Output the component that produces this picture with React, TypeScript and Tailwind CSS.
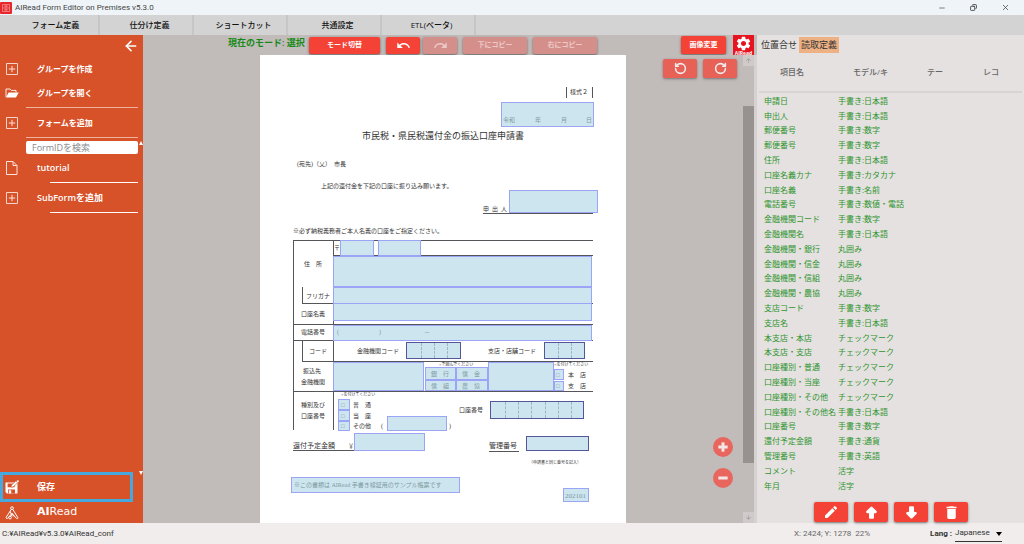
import React, { useState } from 'react';
import { ArrowLeft, Minus, Copy, X, Plus, RotateCcw, RotateCw } from 'lucide-react';
import { MdUndo, MdRedo, MdSettings, MdEdit, MdDelete, MdArrowUpward, MdArrowDownward } from 'react-icons/md';
import { TbArrowBigDownFilled, TbArrowBigUpFilled } from 'react-icons/tb';

type Tone = 'ink' | 'faded';

interface Label {
  x: number;
  y: number; // vertical centre
  text: string;
  size?: 'xs' | 'sm' | 'md' | 'lg';
  tone?: Tone;
}

interface Region {
  x: number;
  y: number;
  w: number;
  h: number;
  dark?: boolean;
  dividers?: number[];
}

const menus = ['フォーム定義', '仕分け定義', 'ショートカット', '共通設定', 'ETL(ベータ)'];

const fields: [string, string][] = [
  ['申請日', '手書き:日本語'],
  ['申出人', '手書き:日本語'],
  ['郵便番号', '手書き:数字'],
  ['郵便番号', '手書き:数字'],
  ['住所', '手書き:日本語'],
  ['口座名義カナ', '手書き:カタカナ'],
  ['口座名義', '手書き:名前'],
  ['電話番号', '手書き:数値・電話'],
  ['金融機関コード', '手書き:数字'],
  ['金融機関名', '手書き:日本語'],
  ['金融機関・銀行', '丸囲み'],
  ['金融機関・信金', '丸囲み'],
  ['金融機関・信組', '丸囲み'],
  ['金融機関・農協', '丸囲み'],
  ['支店コード', '手書き:数字'],
  ['支店名', '手書き:日本語'],
  ['本支店・本店', 'チェックマーク'],
  ['本支店・支店', 'チェックマーク'],
  ['口座種別・普通', 'チェックマーク'],
  ['口座種別・当座', 'チェックマーク'],
  ['口座種別・その他', 'チェックマーク'],
  ['口座種別・その他名', '手書き:日本語'],
  ['口座番号', '手書き:数字'],
  ['還付予定金額', '手書き:通貨'],
  ['管理番号', '手書き:英語'],
  ['コメント', '活字'],
  ['年月', '活字'],
];

// Coordinates on the scanned page, origin at its top left corner
const rules: [number, number, number, number][] = [
  [306, 32, 1, 11],
  [332, 32, 1, 11],
  [223, 158, 110, 1],
  [33, 185, 300, 1],
  [33, 185, 1, 190],
  [73, 185, 1, 190],
  [73, 200, 260, 1],
  [42, 232, 1, 16],
  [42, 248, 291, 1],
  [33, 269, 300, 1],
  [33, 285, 300, 1],
  [42, 285, 1, 21],
  [42, 306, 291, 1],
  [33, 336, 300, 1],
  [33, 395, 61, 1],
  [229, 396, 30, 1],
];

const regions: Region[] = [
  { x: 241, y: 47, w: 93, h: 25 },
  { x: 249, y: 135, w: 89, h: 23 },
  { x: 80, y: 185, w: 34, h: 16 },
  { x: 118, y: 185, w: 43, h: 16 },
  { x: 73, y: 201, w: 259, h: 31 },
  { x: 73, y: 232, w: 259, h: 17 },
  { x: 73, y: 248, w: 259, h: 18 },
  { x: 73, y: 270, w: 259, h: 16 },
  { x: 146, y: 287, w: 55, h: 17, dark: true, dividers: [14, 27, 40] },
  { x: 284, y: 287, w: 41, h: 17, dark: true, dividers: [13, 26] },
  { x: 73, y: 307, w: 91, h: 29 },
  { x: 165, y: 312, w: 31, h: 13 },
  { x: 196, y: 312, w: 32, h: 13 },
  { x: 165, y: 325, w: 31, h: 11 },
  { x: 196, y: 325, w: 32, h: 11 },
  { x: 228, y: 307, w: 66, h: 29 },
  { x: 294, y: 314, w: 10, h: 11 },
  { x: 294, y: 326, w: 10, h: 10 },
  { x: 78, y: 344, w: 12, h: 11 },
  { x: 78, y: 355, w: 12, h: 11 },
  { x: 78, y: 366, w: 12, h: 10 },
  { x: 127, y: 361, w: 60, h: 15 },
  { x: 230, y: 346, w: 94, h: 18, dark: true, dividers: [14, 27, 40, 54, 67, 80] },
  { x: 94, y: 378, w: 71, h: 18 },
  { x: 266, y: 381, w: 63, h: 15, dark: true },
  { x: 31, y: 422, w: 169, h: 16 },
  { x: 303, y: 433, w: 26, h: 14 },
];

const labels: Label[] = [
  { x: 310, y: 37, text: '様式２' },
  { x: 243, y: 65, text: '令和', tone: 'faded' },
  { x: 275, y: 65, text: '年', tone: 'faded' },
  { x: 301, y: 65, text: '月', tone: 'faded' },
  { x: 326, y: 65, text: '日', tone: 'faded' },
  { x: 102, y: 81, text: '市民税・県民税還付金の振込口座申請書', size: 'lg' },
  { x: 37, y: 109, text: '(宛先)（乂）　市長' },
  { x: 61, y: 131, text: '上記の還付金を下記の口座に振り込み願います。' },
  { x: 223, y: 154, text: '申  出  人' },
  { x: 33, y: 176, text: '※必ず納税義務者ご本人名義の口座をご指定ください。' },
  { x: 74, y: 193, text: '〒' },
  { x: 44, y: 209, text: '住　所' },
  { x: 46, y: 241, text: 'フリガナ' },
  { x: 41, y: 259, text: '口座名義' },
  { x: 41, y: 277, text: '電話番号' },
  { x: 77, y: 277, text: '(', tone: 'faded' },
  { x: 119, y: 277, text: ')', tone: 'faded' },
  { x: 164, y: 277, text: '－', tone: 'faded' },
  { x: 49, y: 296, text: 'コード' },
  { x: 97, y: 296, text: '金融機関コード' },
  { x: 228, y: 296, text: '支店・店舗コード' },
  { x: 43, y: 316, text: '振込先' },
  { x: 41, y: 327, text: '金融機関' },
  { x: 179, y: 310, text: '○で囲んでください', size: 'xs' },
  { x: 294, y: 310, text: '○を付けてください', size: 'xs' },
  { x: 171, y: 319, text: '銀　行', tone: 'faded' },
  { x: 202, y: 319, text: '信　金', tone: 'faded' },
  { x: 171, y: 331, text: '信　組', tone: 'faded' },
  { x: 202, y: 331, text: '農　協', tone: 'faded' },
  { x: 296, y: 320, text: '□', tone: 'faded' },
  { x: 296, y: 331, text: '□', tone: 'faded' },
  { x: 308, y: 320, text: '本　店' },
  { x: 308, y: 331, text: '支　店' },
  { x: 81, y: 340, text: '○を付けてください', size: 'xs' },
  { x: 41, y: 350, text: '種別及び' },
  { x: 41, y: 361, text: '口座番号' },
  { x: 81, y: 350, text: '□', tone: 'faded' },
  { x: 81, y: 361, text: '□', tone: 'faded' },
  { x: 81, y: 371, text: '□', tone: 'faded' },
  { x: 93, y: 350, text: '普　通' },
  { x: 93, y: 361, text: '当　座' },
  { x: 93, y: 371, text: 'その他' },
  { x: 121, y: 371, text: '(' },
  { x: 189, y: 371, text: ')' },
  { x: 199, y: 355, text: '口座番号' },
  { x: 33, y: 391, text: '還付予定金額', size: 'md' },
  { x: 88, y: 391, text: '￥', size: 'sm' },
  { x: 229, y: 391, text: '管理番号', size: 'md' },
  { x: 269, y: 408, text: '（申請書と同じ番号を記入）', size: 'xs' },
  { x: 34, y: 430, text: '※この書類は AIRead 手書き検証用のサンプル帳票です', tone: 'faded' },
  { x: 305, y: 441, text: '202101', size: 'md', tone: 'faded' },
];

const labelSizes = {
  xs: 'text-[4px]',
  sm: 'text-[6px]',
  md: 'text-[7px]',
  lg: 'text-[9px]',
};

const AppMark: React.FC = () => (
  <svg viewBox="0 0 12 12" className="h-3 w-3 shrink-0">
    <rect width="12" height="12" rx="1" fill="#e8262d" />
    <path d="M2.5 2.5h7v7h-7zM2.5 6h7M6 2.5v7M4 4.2h4M4 7.8h4" fill="none" stroke="#f79a96" strokeWidth=".7" />
  </svg>
);

const AddIcon: React.FC = () => (
  <svg viewBox="0 0 14 14" className="h-3.5 w-3.5" fill="none" stroke="#fbe3da">
    <path d="M1.5 1.5h11v11h-11z" strokeWidth=".9" />
    <path d="M7 3.8v6.4M3.8 7h6.4" strokeWidth="1" />
  </svg>
);

const FileIcon: React.FC = () => (
  <svg viewBox="0 0 14 16" className="h-4 w-3.5" fill="none" stroke="#fbe3da" strokeWidth="1">
    <path d="M1.5 1.5H8l4 4v9H1.5zM8 1.5v4h4" strokeLinejoin="round" />
  </svg>
);

const FolderIcon: React.FC = () => (
  <svg viewBox="0 0 14 12" className="h-3 w-3.5">
    <path d="M1 10V2h4l1.2 1.4H11v2" fill="none" stroke="#fff" strokeWidth=".9" />
    <path d="M3.6 5.6h10.2L11 10.4H1z" fill="#fff" />
  </svg>
);

const SaveIcon: React.FC = () => (
  <svg viewBox="0 0 14 14" className="h-3.5 w-3.5">
    <path d="M.5 2.5h12v11H2L.5 12z" fill="#fff" />
    <path d="M2.6 3.4h7v3.8h-7zM3 9.4h7v4.1H3z" fill="#d75129" />
    <path d="M3.8 10.2h2.4v3.3H3.8z" fill="#fff" />
    <path d="m6 7.2.5-2L10.8 1l1.8 1.8-4.4 4z" fill="#fff" stroke="#d75129" strokeWidth=".6" />
    <circle cx="12.8" cy="1.3" r="1.1" fill="#fff" />
  </svg>
);

const BrandIcon: React.FC = () => (
  <svg viewBox="0 0 14 14" className="h-3.5 w-3.5" fill="none" stroke="#fff" strokeWidth="1">
    <circle cx="7" cy="2.2" r="1.4" />
    <circle cx="5" cy="11.6" r="1.3" />
    <path d="M6.2 3.5 1.2 11.2c-.4 1 .5 1.6 1.3 1.2L7 7.4l1.8 3M7.9 3.5l4.9 8c.4 1-.6 1.5-1.4.9L7 7.4M5.2 5.2l1.8 5.2" />
  </svg>
);

const Divider: React.FC<{ indent?: boolean }> = ({ indent }) => (
  <div className={`mt-0.5 mb-[3px] mr-[5px] h-px ${indent ? 'ml-[50px] bg-white' : 'ml-[26px] bg-[#efb29d]'}`} />
);

const NavItem: React.FC<{ icon: React.ReactNode; large?: boolean; children: React.ReactNode }> = ({ icon, large, children }) => (
  <button type="button" className="flex h-6 w-full items-center pl-[5px] text-left font-semibold text-white">
    <span className="flex w-8 items-center">{icon}</span>
    <span className={large ? 'text-[9px]' : 'text-[8px]'}>{children}</span>
  </button>
);

const Sidebar: React.FC = () => {
  const [search, setSearch] = useState('');

  return (
    <nav className="relative flex w-[143px] shrink-0 flex-col bg-[#d75129]">
      <div className="flex h-[22px] items-center justify-end pr-1">
        <button type="button" aria-label="閉じる">
          <ArrowLeft size={16} strokeWidth={2.4} className="text-white" />
        </button>
      </div>
      <NavItem icon={<AddIcon />}>グループを作成</NavItem>
      <NavItem icon={<FolderIcon />}>グループを開く</NavItem>
      <Divider />
      <NavItem icon={<AddIcon />}>フォームを追加</NavItem>
      <Divider />
      <input
        type="text"
        aria-label="FormIDを検索"
        placeholder="FormIDを検索"
        value={search}
        onChange={(e) => setSearch(e.target.value)}
        className="mr-[5px] mb-0.5 ml-[26px] h-[13px] rounded-xs bg-white px-1.5 text-[9px] text-gray-700 outline-none placeholder:text-[#8a8a8a]"
      />
      <NavItem large icon={<FileIcon />}>tutorial</NavItem>
      <Divider indent />
      <NavItem large icon={<AddIcon />}>SubFormを追加</NavItem>
      <Divider indent />

      <span className="absolute top-[106px] right-0 border-x-2 border-b-4 border-x-transparent border-b-white" />
      <span className="absolute right-0 bottom-12 border-x-2 border-t-4 border-x-transparent border-t-white" />

      <button type="button" className="mt-auto mr-2.5 flex h-[30px] items-center border-[3px] border-[#45a9df] pl-0.5 text-left text-[9px] font-bold text-white">
        <span className="flex w-8 items-center"><SaveIcon /></span>
        保存
      </button>
      <div className="flex h-[21px] items-center pl-[5px] font-[family-name:'DejaVu_Sans',sans-serif] text-[11px] text-white">
        <span className="flex w-8 items-center"><BrandIcon /></span>
        <span><b>AI</b>Read</span>
      </div>
    </nav>
  );
};

const RedButton: React.FC<React.ButtonHTMLAttributes<HTMLButtonElement>> = ({ className = '', children, ...rest }) => (
  <button
    type="button"
    className={`flex items-center justify-center rounded-xs bg-[#f44336] text-[7px] font-semibold text-white shadow-sm shadow-black/40 disabled:bg-[#d58f8b] disabled:text-[#ecc8c6] ${className}`}
    {...rest}
  >
    {children}
  </button>
);

const Toolbar: React.FC = () => (
  <div className="flex h-5 shrink-0 items-center bg-[#c1bbba] pl-[85px]">
    <p className="w-[81px] pb-1 text-[9px] font-semibold whitespace-nowrap text-[#168a16]">現在のモード: 選択</p>
    <RedButton className="h-[17px] w-[71px]">モード切替</RedButton>
    <RedButton className="ml-1.5 h-[17px] w-[34px]" aria-label="元に戻す"><MdUndo size={15} /></RedButton>
    <RedButton className="ml-[3px] h-[17px] w-[34px]" disabled aria-label="やり直し"><MdRedo size={15} /></RedButton>
    <RedButton className="ml-1.5 h-[17px] w-16" disabled>下にコピー</RedButton>
    <RedButton className="ml-1.5 h-[17px] w-16" disabled>右にコピー</RedButton>
    <RedButton className="ml-auto h-[18px] w-[45px] text-[6px]">画像変更</RedButton>
    <button type="button" aria-label="設定" className="mr-[3px] ml-[7px] flex h-5 w-[21px] flex-col items-center bg-[#e5141f] text-white">
      <MdSettings size={17} className="shrink-0" />
      <span className="text-[5px] leading-[3px] font-bold">AIRead</span>
    </button>
  </div>
);

const ScannedPage: React.FC = () => (
  <div className="relative h-full w-[366px] shrink-0 overflow-hidden bg-white font-['Liberation_Serif','Noto_Sans_CJK_JP',serif]">
    {rules.map(([x, y, w, h], i) => (
      <div key={i} className="absolute bg-[#55555a]" style={{ left: x, top: y, width: w, height: h }} />
    ))}
    {regions.map((r, i) => (
      <div
        key={i}
        className={`absolute border bg-[#cde5ee] ${r.dark ? 'border-[#55559a]' : 'border-[#9ca5f5]'}`}
        style={{ left: r.x, top: r.y, width: r.w, height: r.h }}
      >
        {r.dividers?.map((d) => (
          <span key={d} className="absolute inset-y-0 border-l border-dashed border-[#9db6c2]" style={{ left: d }} />
        ))}
      </div>
    ))}
    {labels.map((l, i) => (
      <span
        key={i}
        className={`absolute -translate-y-1/2 leading-none whitespace-pre ${labelSizes[l.size ?? 'sm']} ${l.tone === 'faded' ? 'text-[#7d9aa3]' : 'text-[#333]'}`}
        style={{ left: l.x, top: l.y }}
      >
        {l.text}
      </span>
    ))}
  </div>
);

const Canvas: React.FC = () => (
  <div className="relative flex min-h-0 flex-1 bg-[#c1bbba]">
    <div className="flex min-w-0 flex-1 justify-center">
      <ScannedPage />
    </div>
    <div className="flex w-[11px] flex-col items-center text-[#9a9493]">
      <MdArrowUpward size={11} className="shrink-0 bg-[#d0cbca] p-0.5" />
      <div className="mt-10 h-[357px] w-full bg-[#979190]" />
      <MdArrowDownward size={11} className="mt-auto shrink-0 bg-[#d0cbca] p-0.5" />
    </div>
    <div className="w-[3px] bg-[#d6d2d1]" />

    {/* Floating view controls */}
    <div className="absolute top-1 right-5 flex gap-1.5">
      <RedButton className="h-[19px] w-[34px] opacity-75" aria-label="左に回転"><RotateCcw size={13} strokeWidth={2.8} /></RedButton>
      <RedButton className="h-[19px] w-[34px] opacity-75" aria-label="右に回転"><RotateCw size={13} strokeWidth={2.8} /></RedButton>
    </div>
    <div className="absolute right-6 bottom-[35px] flex flex-col gap-[11px] text-[#f3e6e4]">
      <button type="button" aria-label="拡大" className="flex h-5 w-5 items-center justify-center rounded-full bg-[#e8665e]">
        <Plus size={16} strokeWidth={4.5} strokeLinecap="butt" />
      </button>
      <button type="button" aria-label="縮小" className="flex h-5 w-5 items-center justify-center rounded-full bg-[#e8665e]">
        <Minus size={16} strokeWidth={4.5} strokeLinecap="butt" />
      </button>
    </div>
  </div>
);

const DefinitionPanel: React.FC = () => {
  const [tab, setTab] = useState('読取定義');

  return (
    <aside className="flex w-[267px] shrink-0 flex-col bg-[#e5e1e0]">
      <div className="mt-0.5 flex h-4 shrink-0 pl-0.5">
        {['位置合せ', '読取定義'].map((name) => (
          <button
            key={name}
            type="button"
            onClick={() => setTab(name)}
            className={`w-10 text-[9px] whitespace-nowrap text-[#333] ${tab === name ? 'bg-[#edb184]' : ''}`}
          >
            {name}
          </button>
        ))}
      </div>
      <div className="min-h-0 flex-1 px-0.5">
        <table className="h-full w-full table-fixed border-collapse text-left text-[8px] leading-[10px] text-[#2e942e]">
          <thead>
            <tr className="h-[39px] border-b-2 border-[#d8d4d3] whitespace-nowrap text-[#666]">
              <th className="w-[79px] pl-[21px] font-medium">項目名</th>
              <th className="w-[82px] pl-[15px] font-medium">モデル/キ</th>
              <th className="w-14 pl-[7px] font-medium">テー</th>
              <th className="pl-[7px] font-medium">レコ</th>
            </tr>
          </thead>
          <tbody>
            {fields.map(([name, model], i) => (
              <tr key={i}>
                <td className="py-0 pr-0 pl-[5px] whitespace-nowrap">{name}</td>
                <td className="py-0 whitespace-nowrap">{model}</td>
                <td />
                <td />
              </tr>
            ))}
          </tbody>
        </table>
      </div>
      <div className="flex h-[30px] shrink-0 items-end gap-1.5 pb-px pl-[57px]">
        <RedButton className="h-5 w-[34px]" aria-label="編集"><MdEdit size={16} /></RedButton>
        <RedButton className="h-5 w-[34px]" aria-label="上へ"><TbArrowBigUpFilled size={15} /></RedButton>
        <RedButton className="h-5 w-[34px]" aria-label="下へ"><TbArrowBigDownFilled size={15} /></RedButton>
        <RedButton className="h-5 w-[34px]" aria-label="削除"><MdDelete size={17} /></RedButton>
      </div>
    </aside>
  );
};

const App: React.FC = () => {
  return (
    <div className="flex h-screen flex-col overflow-hidden bg-[#f0edec] font-['Open_Sans','Noto_Sans_CJK_JP',sans-serif] text-[#333]">
      {/* Title bar */}
      <header className="flex h-[15px] shrink-0 items-center gap-[3px] bg-[#eef4f8] pr-3.5 text-[#444]">
        <AppMark />
        <h1 className="font-[family-name:Roboto,sans-serif] text-[8px]">AIRead Form Editor on Premises v5.3.0</h1>
        <div className="ml-auto flex items-center gap-6">
          <button type="button" aria-label="最小化"><Minus size={8} /></button>
          <button type="button" aria-label="元のサイズに戻す"><Copy size={7} strokeWidth={3} className="-scale-x-100" /></button>
          <button type="button" aria-label="閉じる"><X size={9} /></button>
        </div>
      </header>

      <div className="flex h-5 shrink-0 bg-[#d3d3d3] pl-[13px]">
        {menus.map((name) => (
          <button key={name} type="button" className="mr-[7px] w-[87px] border-r-2 border-[#c6c6c6] pb-0 text-[8px] font-medium text-[#111]">
            {name}
          </button>
        ))}
      </div>

      <main className="flex min-h-0 flex-1">
        <Sidebar />
        <section className="flex min-w-0 flex-1 flex-col">
          <Toolbar />
          <Canvas />
        </section>
        <DefinitionPanel />
      </main>

      <footer className="flex h-[21px] shrink-0 items-center pl-0.5 font-[family-name:Roboto,'Noto_Sans_CJK_JP',sans-serif] text-[8px]">
        <span>C:¥AIRead¥v5.3.0¥AIRead_conf</span>
        <span className="mr-[60px] ml-auto whitespace-pre text-[#666]">X: 2424; Y: 1278  22%</span>
        <label htmlFor="lang" className="mr-[3px] font-bold">Lang :</label>
        <div className="relative mr-[22px]">
          <select id="lang" className="h-4 w-[47px] appearance-none border-b border-[#333] bg-transparent outline-none">
            <option>Japanese</option>
          </select>
          <span className="pointer-events-none absolute top-1.5 right-0 border-x-3 border-t-4 border-x-transparent border-t-black" />
        </div>
      </footer>
    </div>
  );
};

export default App;
